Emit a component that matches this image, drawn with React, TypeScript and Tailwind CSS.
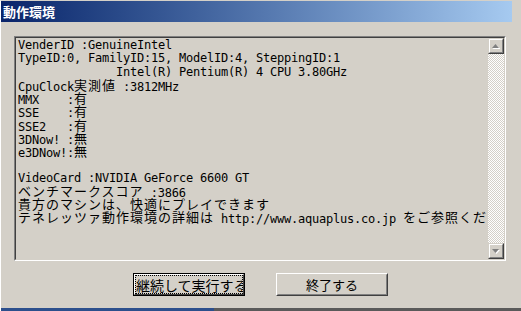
import React from 'react'

const lines = [
  'VenderID :GenuineIntel',
  'TypeID:0, FamilyID:15, ModelID:4, SteppingID:1',
  '              Intel(R) Pentium(R) 4 CPU 3.80GHz',
  'CpuClock実測値 :3812MHz',
  'MMX    :有',
  'SSE    :有',
  'SSE2   :有',
  '3DNow! :無',
  'e3DNow!:無',
  '',
  'VideoCard :NVIDIA GeForce 6600 GT',
  'ベンチマークスコア :3866',
  '貴方のマシンは、快適にプレイできます',
  'テネレッツァ動作環境の詳細は http://www.aquaplus.co.jp をご参照くだ',
]

// split a line into half-width and full-width runs
function Line({ text }: { text: string }) {
  const parts = text.split(/([\u3000-\u9fff\uff00-\uffef]+)/).filter((p) => p !== '')
  return (
    <div className="h-[13.25px] leading-[13px] whitespace-pre">
      {parts.map((p, i) =>
        /[\u3000-\u9fff\uff00-\uffef]/.test(p) ? (
          <span key={i} className="inline-block h-[12px] text-[13px] leading-[12px] tracking-[1px] align-[1px] font-['Noto_Sans_CJK_JP',sans-serif]">
            {p}
          </span>
        ) : (
          <span key={i} className="inline-block h-[13px] leading-[13px]">{p}</span>
        )
      )}
    </div>
  )
}

function ScrollButton({ up }: { up?: boolean }) {
  return (
    <div className="h-[16px] w-[16px] border border-t-[#d4d0c8] border-l-[#d4d0c8] border-b-[#404040] border-r-[#404040]">
      <div className="h-full w-full border border-t-white border-l-white border-b-[#808080] border-r-[#808080] bg-[#d4d0c8] flex items-center justify-center">
        <svg width="8" height="5" viewBox="0 0 8 5">
          {up ? (
            <>
              <polygon points="4.5,1 8.5,5 0.5,5" fill="#ffffff" />
              <polygon points="3.5,0 7,4 0,4" fill="#808080" />
            </>
          ) : (
            <>
              <polygon points="1,1 8,1 4.5,5" fill="#ffffff" />
              <polygon points="0,0 7,0 3.5,4" fill="#808080" />
            </>
          )}
        </svg>
      </div>
    </div>
  )
}

export default function App() {
  return (
    <div className="w-[521px] h-[311px] bg-[#d4d0c8] flex flex-col overflow-hidden border-l border-t border-l-white border-t-[#d4d0c8]">
      <div className="h-[21px] mr-[9px] bg-gradient-to-r from-[#0a246a] to-[#a6caf0] flex items-center pl-[2px]">
        <span className="text-white text-[13px] font-bold font-['Noto_Sans_CJK_JP',sans-serif] leading-none">
          動作環境
        </span>
      </div>

      <div className="pt-[14px] pl-[13px]">
        <div className="w-[492px] h-[225px] border border-t-[#808080] border-l-[#808080] border-b-white border-r-white">
          <div className="h-full w-full border border-t-[#404040] border-l-[#404040] border-b-[#d4d0c8] border-r-[#d4d0c8] flex">
            <div className="flex-1 overflow-hidden pl-[2px] pt-[1px] text-black text-[12px] tracking-[-0.224px] font-['DejaVu_Sans_Mono','Noto_Sans_CJK_JP',monospace]">
              {lines.map((l, i) => (
                <Line key={i} text={l} />
              ))}
            </div>
            <div className="w-[16px] flex flex-col">
              <ScrollButton up />
              <div className="flex-1 bg-[image:repeating-conic-gradient(#ffffff_0%_25%,#d4d0c8_0%_50%)] bg-[length:2px_2px]" />
              <ScrollButton />
            </div>
          </div>
        </div>
      </div>

      <div className="flex pl-[132px] gap-[31px] mt-[12px] font-['Noto_Sans_CJK_JP',sans-serif] text-[13px] text-black">
        <div className="w-[112px] h-[23px] border border-black">
          <div className="h-full w-full border border-t-white border-l-white border-b-[#404040] border-r-[#404040]">
            <div className="h-full w-full border border-dotted border-black overflow-hidden flex items-center whitespace-nowrap text-[14px] leading-none">
              継続して実行する
            </div>
          </div>
        </div>
        <div className="w-[112px] h-[23px] border border-t-white border-l-white border-b-[#404040] border-r-[#404040]">
          <div className="h-full w-full border border-t-[#d4d0c8] border-l-[#d4d0c8] border-b-[#808080] border-r-[#808080] flex items-center justify-center leading-none">
            終了する
          </div>
        </div>
      </div>

      <div className="mt-auto h-[3px] flex">
        <div className="w-[213px] bg-[#2c4f8c]" />
        <div className="flex-1 bg-[#5a5a5a]" />
      </div>
    </div>
  )
}
